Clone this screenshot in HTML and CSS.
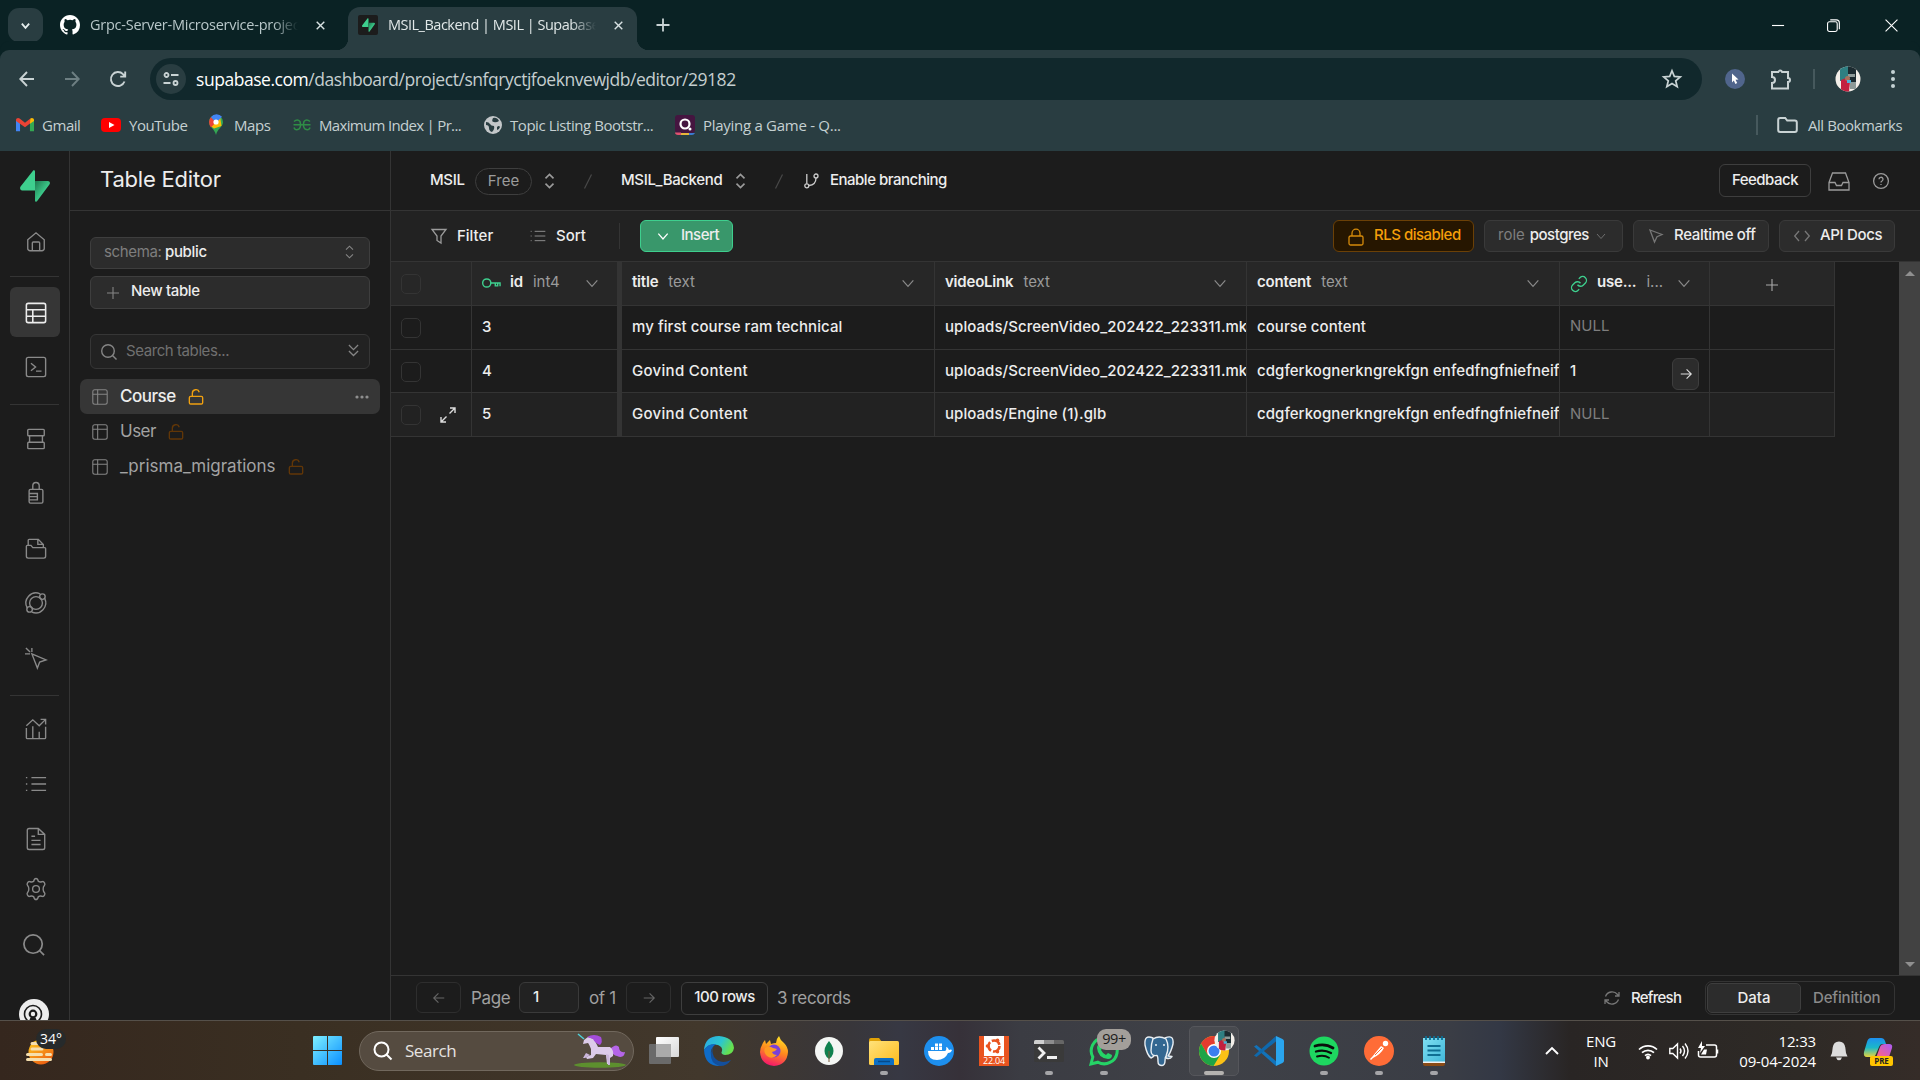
FILE: index.html
```html
<!DOCTYPE html>
<html lang="en">
<head>
<meta charset="utf-8">
<title>MSIL_Backend | MSIL | Supabase</title>
<link rel="stylesheet" href="styles.css">
</head>
<body>
<svg class="defs" aria-hidden="true">
  <linearGradient id="gBolt" x1="0" y1="0" x2="1" y2="1"><stop offset="0" stop-color="#1e7a50"/><stop offset=".6" stop-color="#3ecf8e"/></linearGradient>
  <linearGradient id="gWin" x1="0" y1="0" x2="1" y2="1"><stop offset="0" stop-color="#7ef0ff"/><stop offset="1" stop-color="#0a8fff"/></linearGradient>
  <linearGradient id="gSun" x1="0" y1="0" x2=".6" y2="1"><stop offset="0" stop-color="#ffd21f"/><stop offset="1" stop-color="#ee6212"/></linearGradient>
  <linearGradient id="gEdge" x1="0" y1="0" x2="1" y2=".4"><stop offset="0" stop-color="#2aa7e8"/><stop offset=".6" stop-color="#2cc6cf"/><stop offset="1" stop-color="#66e04e"/></linearGradient>
  <linearGradient id="gFox" x1=".7" y1="0" x2=".4" y2="1"><stop offset="0" stop-color="#ffe226"/><stop offset=".5" stop-color="#ff8a1d"/><stop offset="1" stop-color="#f5156c"/></linearGradient>
  <linearGradient id="gPane" x1="0" y1="0" x2="1" y2="1"><stop offset="0" stop-color="#fff"/><stop offset="1" stop-color="#d8d8d8"/></linearGradient>
  <linearGradient id="gFold" x1="0" y1="0" x2="1" y2="1"><stop offset="0" stop-color="#ffe27a"/><stop offset="1" stop-color="#fdbb1c"/></linearGradient>
  <linearGradient id="gCop1" x1="0" y1="0" x2="0" y2="1"><stop offset="0" stop-color="#1e8ff0"/><stop offset=".5" stop-color="#1ab8c9"/><stop offset="1" stop-color="#e8d43a"/></linearGradient>
  <linearGradient id="gCop2" x1="1" y1="0" x2="0" y2="1"><stop offset="0" stop-color="#a95bf5"/><stop offset=".6" stop-color="#f0609a"/><stop offset="1" stop-color="#ff9a4a"/></linearGradient>
  <linearGradient id="gNote" x1="0" y1="0" x2="1" y2="1"><stop offset="0" stop-color="#7fe0f3"/><stop offset="1" stop-color="#3fb6d8"/></linearGradient>
  <symbol id="x" viewBox="0 0 24 24"><path d="M5 5l14 14M19 5L5 19"/></symbol>
  <symbol id="chev" viewBox="0 0 24 24"><path d="M4 8l8 9 8-9"/></symbol>
  <symbol id="updown" viewBox="0 0 12 18"><path d="M1.500 6L6 1.500 10.500 6M1.500 12L6 16.500 10.500 12"/></symbol>
  <symbol id="grid" viewBox="0 0 24 24"><rect x="1.200" y="1.200" width="21.600" height="21.600" rx="3"/><path d="M1.200 8h21.600M8.500 1.200v21.600"/></symbol>
  <symbol id="unlock" viewBox="0 0 24 24"><rect x="2" y="11" width="20" height="11.500" rx="2"/><path d="M6.500 11V6.500a5.300 5.300 0 0 1 10.400-1.600"/></symbol>
  <symbol id="arrow" viewBox="0 0 24 24"><path d="M3 12h18M13 4l8 8-8 8"/></symbol>
  <symbol id="list" viewBox="0 0 24 24"><path d="M7 5h16M7 12h16M7 19h16M1 5h1.500M1 12h1.500M1 19h1.500"/></symbol>
  <symbol id="bolt" viewBox="0 0 30 32"><path fill="#3ecf8e" d="M15 1.500v19H2.200C.4 20.500-.6 18 .6 16.500L13 .7c.7-.9 2-.4 2 .8z"/><path fill="url(#gBolt)" d="M15 30.500V11h12.800c1.800 0 2.800 2 1.600 3.500L17 31.300c-.7.900-2 .4-2-.8z"/></symbol>
  <symbol id="photo" viewBox="0 0 26 26"><clipPath id="pc"><circle cx="13" cy="13" r="12.500"/></clipPath><g clip-path="url(#pc)"><path fill="#f3efe9" d="M0 0h26v26H0z"/><path fill="#2f7f82" d="M5 0h9v15H5z"/><path fill="#1c2b30" d="M13 0h8v17h-8z"/><path fill="#8d9a98" d="M13 8h7v3h-7zM15 16h6v7h-6z"/><path fill="#c3203f" d="M6 14l5-2 4 4-1 10H6z"/><circle cx="12.500" cy="12.500" r="2.500" fill="#a8705b"/><path fill="#4db0d8" d="M12 14h4v3h-4z"/></g></symbol>
</svg>

<header class="tabstrip">
  <span class="tabsearch"><svg class="ln i12" stroke-width="4"><use href="#chev"/></svg></span>
  <div class="tab">
    <svg class="i20" viewBox="0 0 16 16" fill="#fff"><path d="M8 0C3.580 0 0 3.580 0 8c0 3.540 2.290 6.530 5.470 7.590.4.070.55-.17.55-.38v-1.490c-2.010.37-2.530-.49-2.690-.94-.09-.23-.48-.94-.82-1.130-.28-.15-.68-.52-.01-.53.63-.01 1.080.58 1.230.82.720 1.210 1.870.87 2.330.66.070-.52.280-.87.510-1.070-1.780-.2-3.640-.89-3.640-3.950 0-.87.310-1.590.82-2.150-.08-.2-.36-1.020.080-2.120 0 0 .67-.21 2.200.82a7.600 7.600 0 0 1 4 0c1.530-1.040 2.200-.82 2.200-.82.440 1.100.160 1.920.080 2.120.510.560.82 1.270.82 2.150 0 3.070-1.870 3.750-3.650 3.950.290.250.540.730.540 1.480v2.190c0 .210.150.460.550.380A8 8 0 0 0 16 8c0-4.420-3.580-8-8-8z"/></svg>
    <span class="t tabtxt">Grpc-Server-Microservice-projec</span>
    <svg class="ln i14" stroke-width="2.600"><use href="#x"/></svg>
  </div>
  <div class="tab on">
    <span class="fav"><svg class="favb"><use href="#bolt"/></svg></span>
    <span class="t tabtxt">MSIL_Backend | MSIL | Supabase</span>
    <svg class="ln i14" stroke-width="2.600"><use href="#x"/></svg>
  </div>
  <svg class="ln i16 newtab" viewBox="0 0 16 16" stroke-width="1.800"><path d="M8 1.500v13M1.500 8h13"/></svg>
  <div class="winctl">
    <svg viewBox="0 0 14 14"><path d="M0 7h13"/></svg>
    <svg viewBox="0 0 14 14"><rect x=".6" y="3" width="10.400" height="10.400" rx="2"/><path d="M3.500 1h6.500a3.300 3.300 0 0 1 3.300 3.300V11"/></svg>
    <svg viewBox="0 0 14 14"><path d="M.6.6l12.800 12.800M13.400.6L.6 13.400"/></svg>
  </div>
</header>

<div class="toolbar">
  <svg class="ln i16" viewBox="0 0 16 16" stroke-width="1.900"><path d="M15 8H1.500M8 1L1.300 8 8 15"/></svg>
  <svg class="ln i16 dim" viewBox="0 0 16 16" stroke-width="1.900"><path d="M1 8h13.500M8 1l6.700 7L8 15"/></svg>
  <svg class="ln i18" viewBox="0 0 18 18" stroke-width="1.900"><path d="M15.500 11.500A7 7 0 1 1 14 4.200L16 6M16.200 1.500V6.600h-5"/></svg>
  <div class="url">
    <span class="site"><svg class="ln i16" viewBox="0 0 16 16" stroke-width="1.800"><circle cx="3.500" cy="4" r="2"/><path d="M8 4h7.500M.5 12h7"/><circle cx="12.500" cy="12" r="2"/></svg></span>
    <span class="t urltxt"><b>supabase.com</b>/dashboard/project/snfqryctjfoeknvewjdb/editor/29182</span>
    <svg class="ln i20 star" viewBox="0 0 20 20" stroke-width="1.700"><path d="M10 1.800l2.300 5.600 6 .5-4.600 3.900 1.500 5.900-5.200-3.200-5.200 3.200 1.500-5.900L1.700 7.900l6-.5z"/></svg>
  </div>
  <svg class="i20" viewBox="0 0 20 20"><circle cx="10" cy="10" r="10" fill="#50658c"/><path fill="#fff" d="M7 4.500l6.500 6-3 .2 1.700 3.300-1.800.9-1.600-3.400L7 13.500z"/></svg>
  <svg class="ln i22" viewBox="0 0 22 22" stroke-width="2"><path d="M2 4h6.300a2 2 0 0 1 3.800 0H18v6a2 2 0 0 1 0 4v6.500H2v-5.500a3 3 0 0 0 0-6z"/></svg>
  <i class="vr"></i>
  <svg class="i25"><use href="#photo"/></svg>
  <svg class="i20" viewBox="0 0 20 20" fill="#c4d2d4"><circle cx="10" cy="3" r="2"/><circle cx="10" cy="10" r="2"/><circle cx="10" cy="17" r="2"/></svg>
</div>

<div class="bookmarks">
  <svg viewBox="0 0 20 16" class="bi"><path fill="#4285f4" d="M0 2v13h4.500V6z"/><path fill="#34a853" d="M20 2v13h-4.500V6z"/><path fill="#ea4335" d="M0 2.500C0 .3 2.500-.5 4 .8l6 4.700 6-4.700 1 4.400-7 5.300L0 3.500z"/><path fill="#fbbc04" d="M20 2.500C20 .3 17.500-.5 16 .8l-.5 5.700L20 3.500z"/></svg>
  <span class="t">Gmail</span>
  <svg viewBox="0 0 20 14" class="bi"><rect width="20" height="14" rx="4" fill="#f00"/><path fill="#fff" d="M8 4l5.500 3L8 10z"/></svg>
  <span class="t">YouTube</span>
  <svg viewBox="0 0 14 20" class="bi"><path fill="#34a853" d="M0 7a7 7 0 0 1 14 0c0 5-5.500 6.500-7 13C5.500 13.500 0 12 0 7z"/><path fill="#fbbc04" d="M1.500 11L11 1.200 12.500 11 5 13.500z"/><path fill="#ea4335" d="M0 7a7 7 0 0 1 2-5l5 5-5 5.500Q0 10 0 7z"/><path fill="#4285f4" d="M2 2a7 7 0 0 1 11-.2L7 8z"/><circle cx="7" cy="7" r="2.600" fill="#fff"/></svg>
  <span class="t">Maps</span>
  <svg viewBox="0 0 18 12" class="bi" fill="none" stroke="#2f8d46" stroke-width="1.500"><path d="M1 2.500q3.500-3 6 0 1.500 5-1 7.500-4 2-5-1.500M.5 5.800h17M17 2.500q-3.500-3-6 0-1.500 5 1 7.500 4 2 5-1.500"/></svg>
  <span class="t tight">Maximum Index | Pr...</span>
  <svg viewBox="0 0 18 18" class="bi"><circle cx="9" cy="9" r="9" fill="#c3c7c9"/><path fill="#293d41" d="M2 6q3 0 4 2t4 2q1 3-2 6-3-1-3-4T2 9zM9 2q4-1 6 3-3 2-5 1-3 0-1-4zM13 11q2-2 3 0-1 3-3 3z"/></svg>
  <span class="t">Topic Listing Bootstr...</span>
  <svg viewBox="0 0 20 20" class="bi"><rect width="20" height="18" rx="3" fill="#451540"/><path fill="#3b7bd0" d="M14 18h6q-1 2-3 2h-4z"/><path fill="#e8b53a" d="M6 18h8v2H6z"/><path fill="#e0516f" d="M0 17.500h6V20H3q-3-.5-3-2.500z"/><circle cx="10" cy="9" r="4.500" fill="none" stroke="#fff" stroke-width="2.200"/><circle cx="15" cy="14" r="1.500" fill="#fff"/></svg>
  <span class="t loose">Playing a Game - Q...</span>
  <i class="vr"></i>
  <svg class="ln bi" viewBox="0 0 21 16" stroke-width="2"><path d="M1.200 13V3q0-2 2-2h5l2 2.500h7.600q2 0 2 2V13q0 2-2 2H3.200q-2 0-2-2z"/></svg>
  <span class="t">All Bookmarks</span>
</div>

<main class="app">
  <nav class="rail">
    <svg class="logo"><use href="#bolt"/></svg>
    <svg viewBox="0 0 24 24"><path d="M3 9.500L12 2l9 7.500V19a2.500 2.500 0 0 1-2.500 2.500h-13A2.500 2.500 0 0 1 3 19zM8 21.500V13a1 1 0 0 1 1-1h6a1 1 0 0 1 1 1v8.500"/></svg>
    <hr>
    <span class="cur"><svg viewBox="0 0 24 24"><rect x="1.500" y="1.500" width="21" height="21" rx="2"/><path d="M1.500 8.500h21M1.500 15.500h21M8.500 8.500v14"/></svg></span>
    <svg viewBox="0 0 24 24"><rect x="1.500" y="1.500" width="21" height="21" rx="2"/><path d="M6.500 8l5 4-5 4M12 16.500h6"/></svg>
    <hr>
    <svg viewBox="0 0 24 24"><rect x="3" y="1.500" width="18" height="7" rx="1"/><rect x="3" y="15.500" width="18" height="7" rx="1"/><path d="M5 8.500v7M19 8.500v7"/></svg>
    <svg viewBox="0 0 24 24"><rect x="4.500" y="8" width="15" height="15" rx="1.500"/><path d="M8.500 8V4a3.500 3.500 0 0 1 7 0v4M4.500 12.500h9v7h-9M4.500 16h9"/></svg>
    <svg viewBox="0 0 24 24"><path d="M3.500 8V2.500q0-1 1-1h10l5.500 5.500v3M14 1.500V7h6M1.500 20V9q0-1 1-1h4l2 2.500h13q1 0 1 1V20q0 2-2 2h-17q-2 0-2-2z"/></svg>
    <svg viewBox="0 0 24 24"><circle cx="12" cy="12" r="7"/><circle cx="19" cy="5" r="3"/><circle cx="5" cy="19" r="3"/><path d="M16.500 2A11 11 0 0 0 2.500 17.500M7.500 22A11 11 0 0 0 21.500 7"/></svg>
    <svg viewBox="0 0 24 24"><path d="M7.500 7.500L23 14l-7 2.500L13.500 23zM1 1l4.500 4.500M7.500 1v4.500M0 7.500h5.500"/></svg>
    <hr>
    <svg viewBox="0 0 24 24"><path d="M1.500 11v10.500q0 1 1 1h19q1 0 1-1v-12M8.500 9v13M15.500 15v7M1.500 8.500L8.500 2l7 6.500L22.500 1.500M17 1.500h5.500V7"/></svg>
    <svg><use href="#list"/></svg>
    <svg viewBox="0 0 24 24"><path d="M14.500.5H4.500Q2.500.5 2.500 2.500v19q0 2 2 2h15q2 0 2-2V7zM14.500.5V7h7M7 9h4M7 13.500h10M7 18h10"/></svg>
    <svg viewBox="0 0 24 24"><circle cx="12" cy="12" r="3.700"/><path d="M12 .5c2 0 2.200 1.800 2.600 3.300 2 1 2 .8 4.400.1 1.700-.5 3.500 2.700 2.300 4-1.500 1.600-1.600 1.600-1.500 4.100s0 2.500 1.500 4.100c1.200 1.300-.6 4.500-2.300 4-2.400-.7-2.400-.9-4.400.1-.4 1.500-.6 3.300-2.600 3.300s-2.200-1.800-2.600-3.300c-2-1-2-.8-4.400-.1-1.700.5-3.500-2.700-2.300-4 1.500-1.600 1.500-1.600 1.500-4.100s0-2.500-1.500-4.100c-1.200-1.300.6-4.500 2.300-4 2.400.7 2.400.9 4.400-.1C9.800 2.300 10 .5 12 .5z"/></svg>
    <svg class="find" viewBox="0 0 24 24"><circle cx="11" cy="11" r="10"/><path d="M18 18l5 5"/></svg>
    <svg class="me" viewBox="0 0 30 30"><circle cx="15" cy="15" r="15" fill="#ededed"/><g fill="none" stroke="#1c1c1c" stroke-width="1.600"><circle cx="14" cy="15" r="8.500"/><circle cx="14" cy="15" r="3.300" stroke-width="2.200"/></g><path d="M11.500 18.500L10 22h8l-1.500-3.500z" fill="#1c1c1c"/></svg>
  </nav>

  <aside class="panel">
    <h1><span class="t">Table Editor</span></h1>
    <div class="pick"><span class="t mut">schema:</span><span class="t">public</span><svg class="ud"><use href="#updown"/></svg></div>
    <div class="pick new"><svg viewBox="0 0 12 12"><path d="M6 0v12M0 6h12"/></svg><span class="t">New table</span></div>
    <div class="pick search"><svg viewBox="0 0 16 16"><circle cx="7" cy="7" r="6.300"/><path d="M11.500 11.500L15.500 15.500"/></svg><span class="t">Search tables...</span><svg viewBox="0 0 12 14"><path d="M1 1l5 5 5-5M1 7.500l5 5 5-5"/></svg></div>
    <div class="item on"><svg class="i16 g"><use href="#grid"/></svg><span class="t">Course</span><svg class="i16 lk"><use href="#unlock"/></svg><svg class="dots" viewBox="0 0 14 4"><circle cx="2" cy="2" r="1.600"/><circle cx="7" cy="2" r="1.600"/><circle cx="12" cy="2" r="1.600"/></svg></div>
    <div class="item"><svg class="i16 g"><use href="#grid"/></svg><span class="t">User</span><svg class="i16 lk"><use href="#unlock"/></svg></div>
    <div class="item long"><svg class="i16 g"><use href="#grid"/></svg><span class="t">_prisma_migrations</span><svg class="i16 lk"><use href="#unlock"/></svg></div>
  </aside>

  <section class="work">
    <div class="crumbs">
      <span class="t">MSIL</span><span class="pill"><span class="t">Free</span></span><svg class="ud"><use href="#updown"/></svg>
      <svg class="slash" viewBox="0 0 8 15"><path d="M7.500.5L.5 14.500"/></svg>
      <span class="t">MSIL_Backend</span><svg class="ud"><use href="#updown"/></svg>
      <svg class="slash" viewBox="0 0 8 15"><path d="M7.500.5L.5 14.500"/></svg>
      <svg class="branch" viewBox="0 0 15 16"><circle cx="2.800" cy="12.800" r="2"/><circle cx="12" cy="3" r="2"/><path d="M2.800 1v9.800M12 5q0 7-7.200 7.500"/></svg>
      <span class="t tight">Enable branching</span>
      <span class="btn ghost fb"><span class="t tight">Feedback</span></span>
      <svg class="i22 hd" viewBox="0 0 22 22"><path d="M1 12.500L4.500 3h13L21 12.500V20H1zM1 12.500h6l1.500 3h5l1.500-3h6"/></svg>
      <svg class="i16 hd" viewBox="0 0 16 16"><circle cx="8" cy="8" r="7.400"/><path d="M6 6.300a2 2 0 1 1 3 1.700q-1 .5-1 1.500M8 11v1"/></svg>
    </div>
    <div class="tools">
      <svg class="i16" viewBox="0 0 16 16"><path d="M1 1.500h14L10 8v7l-4-2.500V8z"/></svg><span class="t wide">Filter</span>
      <svg class="i16"><use href="#list"/></svg><span class="t wide">Sort</span>
      <i class="vr"></i>
      <span class="btn ins"><svg class="i14"><use href="#chev"/></svg><span class="t tight">Insert</span></span>
      <span class="btn rls"><svg class="i18" viewBox="0 0 18 18"><rect x="2" y="8" width="14" height="9" rx="1.500"/><path d="M5 8V5.200a4 4 0 0 1 8 0V8"/></svg><span class="t tight">RLS disabled</span></span>
      <span class="btn role"><span class="t mut">role</span><span class="t tight">postgres</span><svg class="i12"><use href="#chev"/></svg></span>
      <span class="btn rt"><svg class="i14" viewBox="0 0 14 14"><path d="M1 1l12 4.500-5 2.200L5.500 13z"/></svg><span class="t">Realtime off</span></span>
      <span class="btn api"><svg class="i16" viewBox="0 0 16 16"><path d="M5 3L.7 8 5 13M11 3l4.300 5L11 13"/></svg><span class="t">API Docs</span></span>
    </div>

    <div class="body">
      <div class="table">
        <div class="row head">
          <div class="sel"><i class="cb"></i></div>
          <div class="c key"><svg class="ki" viewBox="0 0 20 12"><circle cx="5" cy="6" r="4.300"/><path d="M9.300 6H19v3.500M14 6v3h2.500V6"/></svg><b class="t">id</b><span class="t ty">int4</span><svg class="cv"><use href="#chev"/></svg></div>
          <div class="c"><b class="t">title</b><span class="t ty">text</span><svg class="cv"><use href="#chev"/></svg></div>
          <div class="c"><b class="t">videoLink</b><span class="t ty">text</span><svg class="cv"><use href="#chev"/></svg></div>
          <div class="c"><b class="t">content</b><span class="t ty">text</span><svg class="cv"><use href="#chev"/></svg></div>
          <div class="c lnk"><svg class="li" viewBox="0 0 24 24"><path d="M10 13a5 5 0 0 0 7.540.540l3-3a5 5 0 0 0-7.070-7.070l-1.720 1.710M14 11a5 5 0 0 0-7.540-.540l-3 3a5 5 0 0 0 7.070 7.070l1.710-1.710"/></svg><b class="t">use...</b><span class="t ty">i...</span><svg class="cv"><use href="#chev"/></svg></div>
          <div class="c add"><svg class="i12" viewBox="0 0 12 12"><path d="M6 0v12M0 6h12"/></svg></div>
        </div>
        <div class="row"><div class="sel"><i class="cb"></i></div><div class="c"><span class="t">3</span></div><div class="c"><span class="t">my first course ram technical</span></div><div class="c"><span class="t">uploads/ScreenVideo_202422_223311.mk</span></div><div class="c"><span class="t">course content</span></div><div class="c nul up"><span class="t">NULL</span></div><div class="c"></div></div>
        <div class="row"><div class="sel"><i class="cb"></i></div><div class="c"><span class="t">4</span></div><div class="c"><span class="t gv">Govind Content</span></div><div class="c"><span class="t">uploads/ScreenVideo_202422_223311.mk</span></div><div class="c"><span class="t">cdgferkognerkngrekfgn enfedfngfniefneif</span></div><div class="c"><span class="t">1</span><span class="go"><svg class="i14"><use href="#arrow"/></svg></span></div><div class="c"></div></div>
        <div class="row hov"><div class="sel"><i class="cb"></i><svg class="i16 ex" viewBox="0 0 16 16"><path d="M9.500 6.500l5.500-5.500M10 1h5v5M6.500 9.500L1 15M1 10v5h5"/></svg></div><div class="c"><span class="t">5</span></div><div class="c"><span class="t gv">Govind Content</span></div><div class="c"><span class="t">uploads/Engine (1).glb</span></div><div class="c"><span class="t">cdgferkognerkngrekfgn enfedfngfniefneif</span></div><div class="c nul"><span class="t">NULL</span></div><div class="c"></div></div>
      </div>
      <div class="scroll"><i></i><i></i></div>
    </div>

    <div class="foot">
      <span class="btn ghost off"><svg class="i14 flip"><use href="#arrow"/></svg></span>
      <span class="t big">Page</span>
      <span class="btn pg"><span class="t">1</span></span>
      <span class="t big">of 1</span>
      <span class="btn ghost off"><svg class="i14"><use href="#arrow"/></svg></span>
      <span class="btn ghost rows"><span class="t tight">100 rows</span></span>
      <span class="t big">3 records</span>
      <svg class="i16 rf" viewBox="0 0 16 16"><path d="M15 2v4h-4M1 14v-4h4M1.500 6.500A7 7 0 0 1 13.500 4.500L15 6M14.500 9.500A7 7 0 0 1 2.500 11.500L1 10"/></svg>
      <span class="t tight">Refresh</span>
      <span class="seg"><span class="sg"><span class="t wide">Data</span></span><span class="t df">Definition</span></span>
    </div>
  </section>
</main>

<footer class="taskbar">
  <div class="weather"><svg viewBox="0 0 28 26"><circle cx="15" cy="13" r="12.500" fill="url(#gSun)"/><g stroke="#f5dfae" stroke-width="3" stroke-linecap="round"><path d="M6 4.500h6M6 10h10M1.500 15.500h14M20.500 15.500h4M1.500 20.500h23"/></g></svg><span class="deg">34°</span></div>
  <svg class="win" viewBox="0 0 29 29" fill="url(#gWin)"><path d="M0 1q0-1 1-1h13v14H0zM15 0h13q1 0 1 1v13H15zM0 15h14v14H1q-1 0-1-1zM15 15h14v13q0 1-1 1H15z"/></svg>
  <div class="find2"><svg class="i20" viewBox="0 0 20 20"><circle cx="8.500" cy="8.500" r="7"/><path d="M13.500 13.500L18.500 18.500"/></svg><span class="t">Search</span>
    <svg class="uni" viewBox="0 0 53 34"><ellipse cx="27" cy="31" rx="26" ry="2.800" fill="#5d8f2e"/><path fill="#b565e8" d="M37 15q6-6 9-2 0 6 6 5-1 7-8 4-4-1-5-4z"/><path fill="#dccbe9" d="M11 6l4-3 6 2 4 8 12 0q4 3 3 9l-3 2v6h-3l-1-9-10-1-3 4-6 1-1-2 5-2 0-6q-2-5-3-6l-5 1z"/><path fill="#cbb6dc" d="M13 19l-3 5h2l5-3zM33 20l2 11h2l-1-10z"/><path fill="#a44ddb" d="M14 3q7-4 14 0 2 5-1 8-5-2-7-6z"/><path stroke="#4fd0d8" stroke-width="1.500" d="M11 5L5 0"/></svg>
  </div>
  <div class="apps">
    <span class="ap"><svg viewBox="0 0 30 30"><rect x="0" y="8" width="22" height="20" rx="1" fill="#6a6a6a"/><rect x="7" y="1" width="23" height="20" rx="1" fill="url(#gPane)"/><path fill="#aaa" d="M7 8h15v13H7z"/></svg></span>
    <span class="ap"><svg viewBox="0 0 30 30"><path fill="url(#gEdge)" d="M0 14Q1 0 15 0q14 1 15 12-1 7-9 7-5-1-3-4 1-4-4-6Q5 7 0 14z"/><path fill="#0f6cc9" d="M0 14Q4 7 12 8q-6 4-5 11 2 9 10 11-16 1-17-16z"/><path fill="#134f9c" d="M12 8q-6 5-2 13 6 8 17 3-4 6-11 6Q6 28 7 17q1-6 5-9z"/></svg></span>
    <span class="ap"><svg viewBox="0 0 30 30"><path fill="url(#gFox)" d="M3 9q1-3 3-5l1 4 4-4 1 4q3-1 5-1 0-4 3-7 1 4 5 7 4 4 4 9-1 13-14 14Q2 29 1 16q0-4 2-7z"/><circle cx="15" cy="15" r="6.500" fill="#7b40d8"/><path fill="#ff9a22" d="M6 12q4-3 8 0l4 1q-2 3-5 3 1 3 5 3-5 5-10 1-4-4-2-8z"/></svg></span>
    <span class="ap"><svg viewBox="0 0 30 30"><circle cx="15" cy="15" r="14" fill="#f4f6f4"/><path fill="#10814f" d="M15 5q6 7 4 13-1 3-4 5-3-2-4-5-2-6 4-13z"/><path stroke="#7a5b3a" d="M15 15v11"/></svg></span>
    <span class="ap run"><svg viewBox="0 0 30 30"><path fill="#e0a106" d="M0 4q0-2 2-2h8l3 4v6H0z"/><rect y="5" width="30" height="24" rx="1.500" fill="url(#gFold)"/><path fill="#0d6fc4" d="M5 29v-5q0-2 2-2h16q2 0 2 2v5z"/><path stroke="#064a89" stroke-width="1.500" d="M9 25.500h12"/></svg></span>
    <span class="ap"><svg viewBox="0 0 30 30"><circle cx="15" cy="15" r="15" fill="#1d8fee"/><path fill="#fff" d="M4 15h17q2-1 1-4 2 0 3 3 2-1 3 0-1 3-4 3-3 7-11 7-9 0-9-9zM7 11h3v3H7zM11 11h3v3h-3zM15 11h3v3h-3zM11 7.500h3v3h-3zM15 7.500h3v3h-3z"/></svg></span>
    <span class="ap ubu"><svg viewBox="0 0 30 30"><path fill="#e95420" d="M0 0h30v30H0z"/><path fill="#fff" d="M5 0h20v20H5z"/><circle cx="15" cy="10" r="5.500" fill="none" stroke="#e95420" stroke-width="2.600" stroke-dasharray="9.500 2"/><g fill="#e95420"><circle cx="8.500" cy="10" r="1.800"/><circle cx="18.500" cy="4.200" r="1.800"/><circle cx="18.500" cy="15.800" r="1.800"/></g></svg><span class="ver">22.04</span></span>
    <span class="ap run"><svg viewBox="0 0 30 30"><rect y="4" width="30" height="22" rx="1.500" fill="#3a3a3a"/><path fill="#cfcfcf" d="M0 8V5.500Q0 4 1.500 4H10v4z"/><path fill="#8d8d8d" d="M10 4h10v4H10z"/><path fill="#666" d="M20 4h8.500Q30 4 30 5.500V8H20z"/><path fill="none" stroke="#f0f0f0" stroke-width="2.800" d="M4.500 11.500L10 17l-5.500 5.500M13 21.500h10"/></svg></span>
    <span class="ap run"><svg viewBox="0 0 30 30"><path fill="none" stroke="#25d366" stroke-width="3" d="M2 28l1.800-7A13 13 0 1 1 9 26.200z"/><path fill="#25d366" d="M9 9q2-2 3 0l1 3-1 2q2 4 5 5l2-2 4 2q0 4-4 4Q9 22 8 12q0-2 1-3z"/></svg><span class="cnt">99+</span></span>
    <span class="ap"><svg viewBox="0 0 30 30"><g fill="#336791" stroke="#e8eef3" stroke-width="1.400" stroke-linejoin="round"><path d="M9 2Q0-2 1 9q2 10 6 13 3-1 4-4z"/><path d="M21 2q9-4 8 6-2 8-5 12l4 .5q-2 3-6 1.500V8z"/><path d="M9 3q6-4 13 0 4 8 0 17-1 1-1 5 0 4-3 4.500-4 0-4-4 0-5-1-6-6 1-6-5Q7 8 9 3z"/></g><circle cx="12" cy="9" r=".9" fill="#fff"/><circle cx="20" cy="9" r=".9" fill="#fff"/></svg></span>
    <span class="ap run act"><svg viewBox="0 0 30 30"><circle cx="15" cy="15" r="15" fill="#fbc116"/><path fill="#e33b2e" d="M2 7.500A15 15 0 0 1 28 7.500H15l-6.500 11z"/><path fill="#1ea446" d="M2 7.500A15 15 0 0 0 14.500 30l7-11.500H8.500z"/><circle cx="15" cy="15" r="7" fill="#fff"/><circle cx="15" cy="15" r="5.500" fill="#3a7ef0"/></svg><svg class="ph"><use href="#photo"/></svg></span>
    <span class="ap"><svg viewBox="0 0 30 30"><path fill="#1273ba" d="M0 10.500L2.500 9l20 16.500L22 30z"/><path fill="#0f69ad" d="M0 19.500L2.500 21l20-16L22 0z"/><path fill="#2aa5ee" d="M22 0l6.500 3Q30 4 30 5v20q0 1-1.500 2L22 30z"/></svg></span>
    <span class="ap run"><svg viewBox="0 0 30 30"><circle cx="15" cy="15" r="14.500" fill="#1ed760"/><path fill="none" stroke="#0a0f0b" stroke-linecap="round" d="M6 10q10-3 18 2" stroke-width="2.800"/><path fill="none" stroke="#0a0f0b" stroke-linecap="round" d="M7 15.500q8-2.500 15 1.500" stroke-width="2.300"/><path fill="none" stroke="#0a0f0b" stroke-linecap="round" d="M8 20.500q7-2 12 1.300" stroke-width="1.900"/></svg></span>
    <span class="ap run"><svg viewBox="0 0 30 30"><circle cx="15" cy="15" r="15" fill="#ff6c37"/><circle cx="21.500" cy="7.500" r="2.700" fill="#fff"/><path fill="#fff" d="M8 21l9-11 3 2q-3 6-11 10l-2 2-1-1z"/><path stroke="#ff6c37" d="M11 19l7-7"/></svg></span>
    <span class="ap run"><svg viewBox="0 0 30 30"><path fill="url(#gNote)" d="M4 2h22v25H4z"/><path fill="#8a4b16" d="M4 27h22v1q0 2-2 2H6q-2 0-2-2z"/><path fill="#f1f1f1" d="M4 25.500h22v1.500H4z"/><path stroke="#0e6e93" stroke-width="1.800" d="M8.500 10h13M8.500 14.500h13M8.500 19h13M7 0v4M11 0v4M15 0v4M19 0v4M23 0v4"/></svg></span>
  </div>
  <div class="tray">
    <svg class="i14 tl" viewBox="0 0 14 14"><path d="M1 10l6-6 6 6"/></svg>
    <div class="lang"><span class="t">ENG</span><span class="t">IN</span></div>
    <svg class="i20 tl" viewBox="0 0 20 20"><path d="M1 8.500a13 13 0 0 1 18 0M4 11.700a8.700 8.700 0 0 1 12 0M7 14.700a4.500 4.500 0 0 1 6 0" stroke-width="1.700"/><circle cx="10" cy="16.500" r="1" fill="#fff"/></svg>
    <svg class="i20 tl" viewBox="0 0 20 20"><path stroke-width="1.400" d="M.8 7.500h3L8.500 3v14L3.800 12.500h-3zM11 7.500q2 2.500 0 5M13.500 5q4 5 0 10M16 2.500q6 7.500 0 15"/></svg>
    <svg class="i22 tl" viewBox="0 0 22 22"><path stroke-width="1.500" d="M9 5h8.500q2 0 2 2v8q0 2-2 2h-14q-2 0-2-2v-4M20.500 9.500v4"/><path fill="#fff" stroke="none" d="M5 1L1 8h3L3 13l5-7H5zM4 14.500h5l1-5H7z"/></svg>
    <div class="clock"><span class="t">12:33</span><span class="t">09-04-2024</span></div>
    <svg class="i20" viewBox="0 0 20 20" fill="#dcdcdc"><path d="M10 .5q5.500 0 6.300 6L17 12l1.500 3.500h-17L3 12l.7-5.500Q4.500.5 10 .5zM7 16.500h6q-1 2.800-3 2.800t-3-2.800z"/></svg>
    <div class="cop"><svg viewBox="0 0 30 28"><path fill="url(#gCop1)" d="M8 1h10q3 0 4 3l1 3h-4q-2 0-3 3l-3 7q-1 3-4 3H4q-4 0-3-5L4 5q1-4 4-4z"/><path fill="url(#gCop2)" d="M22 7h4q4 0 3 4l-3 9q-1 4-4 4H9q3 0 4-3l4-11q1-3 5-3z"/></svg><span class="pre">PRE</span></div>
  </div>
</footer>
</body>
</html>
```
FILE: styles.css
```css
* { box-sizing: border-box; }
body { margin: 0; width: 1920px; height: 1080px; overflow: hidden; display: flex; flex-direction: column; background: #1c1c1c; font-family: Inter, sans-serif; font-size: 15px; line-height: 20px; color: #ededed; }
svg { display: block; flex: none; overflow: visible; }
.defs { position: absolute; width: 0; height: 0; }
.t { white-space: nowrap; display: block; }
.t.wide { letter-spacing: 0; }
.ln { fill: none; stroke: #c9d3d4; stroke-linecap: butt; }
.i12 { width: 12px; height: 12px; } .i14 { width: 14px; height: 14px; } .i16 { width: 16px; height: 16px; } .i18 { width: 18px; height: 18px; } .i20 { width: 20px; height: 20px; } .i22 { width: 22px; height: 22px; } .i25 { width: 26px; height: 26px; }
.vr { display: block; width: 2px; height: 20px; background: #46595d; }

/* browser chrome */
.tabstrip, .toolbar, .bookmarks, .taskbar { font-family: "Open Sans", "Noto Sans", sans-serif; }
.tabstrip { height: 50px; background: #0a2224; display: flex; align-items: center; flex: none; }
.tabsearch { width: 35px; height: 34px; margin-left: 8px; border-radius: 11px; background: #293d41; display: grid; place-items: center; }
.tabsearch svg { width: 11px; height: 11px; stroke: #e6eeee; }
.tab { display: grid; grid-template-columns: 30px 208px 1fr; align-items: center; margin-left: 17px; width: 288px; height: 42px; }
.tab > .i14 { margin-left: 16px; width: 13px; height: 13px; stroke: #d8e2e3; }
.tab.on { align-self: flex-end; margin-left: 0; padding: 0 0 7px 10px; width: 289px; height: 43px; background: #293d41; border-radius: 12px 12px 0 0; position: relative; }
.tab.on::before, .tab.on::after { content: ""; position: absolute; bottom: 0; width: 12px; height: 12px; }
.tab.on::before { left: -12px; background: radial-gradient(circle at 0 0, transparent 12px, #293d41 12.5px); }
.tab.on::after { right: -12px; background: radial-gradient(circle at 100% 0, transparent 12px, #293d41 12.5px); }
.tabtxt { font-size: 14.5px; letter-spacing: -0.25px; overflow: hidden; color: #b8c7c9; -webkit-mask-image: linear-gradient(90deg, #000 88%, transparent); mask-image: linear-gradient(90deg, #000 88%, transparent); }
.on .tabtxt { color: #e1e8e8; letter-spacing: -0.5px; }
.fav { width: 20px; height: 20px; border-radius: 2px; background: #1c1c1c; display: grid; place-items: center; }
.favb { width: 13px; height: 14px; }
.newtab { margin-left: 18px; }
.winctl { margin-left: auto; display: flex; gap: 45px; padding-right: 22px; align-items: center; }
.winctl svg { width: 13px; height: 13px; fill: none; stroke: #fff; stroke-width: 1.2; }
.winctl svg:first-child { margin-right: -3px; }

.toolbar { height: 58px; background: #293d41; flex: none; display: grid; grid-template-columns: 45px 45px 41px 1552px 44px 48px 33px 38px 1fr; align-items: center; padding: 0 0 0 19px; border-radius: 9px 9px 0 0; box-shadow: 0 -9px 0 0 #0a2224; }
.toolbar .dim { stroke: #6d7f82; }
.url { height: 42px; border-radius: 21px; background: #11282c; display: grid; grid-template-columns: 40px 1fr 20px; align-items: center; padding: 0 20px 0 6px; }
.site { width: 30px; height: 30px; border-radius: 50%; background: #293d41; display: grid; place-items: center; }
.urltxt { font-size: 17.5px; line-height: 24px; letter-spacing: -0.46px; color: #c5cecf; }
.urltxt b { font-weight: 400; color: #fff; }
.toolbar > .i20 { margin-left: 23px; }
.toolbar > .i22 { margin-left: 24px; }
.toolbar > .vr { margin-left: 19px; }
.toolbar > .i25 { margin-left: 8px; }
.toolbar > .i20:last-child { margin-left: 18px; }

.bookmarks { height: 43px; background: #293d41; flex: none; display: grid; grid-template-columns: 26px 59px 28px 80px 25px 59px 26px 165px 26px 165px 28px 1053px 21px 31px 1fr; padding: 0 0 9px 16px; align-items: center; color: #c5d0d1; font-size: 15px; letter-spacing: -0.45px; }
.bookmarks .tight { letter-spacing: -0.68px; }
.bookmarks .loose { letter-spacing: -0.28px; }
.bi { width: 18px; height: 18px; }
.bookmarks .bi:nth-of-type(2), .bookmarks .bi:nth-of-type(6) { width: 20px; height: 20px; }
.bookmarks .bi:nth-of-type(3) { width: 14px; height: 20px; }
.bookmarks .bi:nth-of-type(7) { width: 21px; }

/* dashboard */
.app { flex: 1; min-height: 0; display: grid; grid-template-columns: 70px 321px 1fr; overflow: hidden; letter-spacing: -0.35px; }
.app .tight { letter-spacing: -0.5px; }
.rail { border-right: 1px solid #343434; display: grid; grid-template-rows: 70px 42px 24px 50px 60px 12px 60px 48px 64px 44px 66px 6px 64px 46px 64px 36px 74px 39px; justify-items: center; align-items: center; padding-left: 2px; overflow: hidden; }
.rail svg { width: 22px; height: 22px; fill: none; stroke: #8a8a8a; stroke-width: 1.5; }
.rail .logo { width: 30px; height: 32px; stroke: none; margin-right: 1px; }
.rail hr { width: 49px; height: 1px; border: 0; background: #343434; margin: 2px 2px 0 0; }
.rail .cur { width: 50px; height: 50px; margin-right: 1px; border-radius: 6px; background: #363636; display: grid; place-items: center; }
.rail .cur svg { stroke: #ededed; stroke-width: 1.7; margin-left: 1px; margin-top: 2px; }
.rail .find { margin-right: 4px; margin-top: 2px; stroke-width: 1.9; }
.rail .me { width: 30px; height: 30px; stroke: none; margin-right: 3px; align-self: start; margin-top: 18px; }

.panel { border-right: 1px solid #343434; display: flex; flex-direction: column; }
.panel h1 { margin: 0; height: 60px; padding: 14px 0 0 30px; border-bottom: 1px solid #343434; font-size: 22px; font-weight: 400; line-height: 28px; letter-spacing: -0.2px; }
.pick { margin: 26px 20px 0; height: 32px; border: 1px solid #3e3e3e; border-radius: 6px; background: #2c2c2c; display: grid; grid-template-columns: 61px 1fr 12px; align-items: center; padding: 0 13px 2px 13px; font-weight: 500; flex: none; }
.pick svg { fill: none; stroke: #858585; stroke-width: 1.4; }
.ud { width: 11px; height: 14px; }
.mut { color: #7e7e7e; font-weight: 400; }
.pick.new { margin-top: 7px; height: 33px; grid-template-columns: 24px 1fr; padding: 0 15px 3px 16px; }
.pick.new svg { width: 12px; height: 12px; margin-top: 4px; stroke-width: 1.1; }
.pick.search { margin-top: 25px; height: 35px; background: #222; border-color: #363636; grid-template-columns: 25px 1fr 12px; padding: 0 9px 2px 10px; color: #707070; font-weight: 400; letter-spacing: -0.42px; }
.pick.search svg { width: 16px; height: 16px; margin-top: 3px; }
.pick.search svg:last-child { width: 11px; height: 13px; margin-top: 0; }
.item { margin: 0 10px; height: 35px; flex: none; border-radius: 7px; display: flex; align-items: center; padding: 0 11px 0 12px; font-size: 17px; letter-spacing: -0.5px; color: #a3a3a3; }
.item.long { letter-spacing: 0; }
.item.on { margin-top: 10px; background: #363636; color: #ededed; font-weight: 500; }
.item svg { fill: none; stroke: #858585; stroke-width: 1.6; margin-right: 12px; }
.item .lk { margin-left: 12px; stroke: #613607; stroke-width: 2; }
.item.on .lk { stroke: #f0a010; }
.item .t { margin-top: -1px; }
.item .dots { width: 14px; height: 4px; fill: #8f8f8f; stroke: none; margin: 0 0 0 auto; }

.work { display: flex; flex-direction: column; min-width: 0; font-weight: 500; }
.crumbs { height: 60px; border-bottom: 1px solid #343434; display: grid; grid-template-columns: 45px 69px 40px 37px 114px 40px 29px 26px 889px 109px 45px 1fr; padding: 0 0 1px 39px; align-items: center; flex: none; }
.crumbs svg, .tools svg, .foot svg { fill: none; stroke: #9b9b9b; stroke-width: 1.3; }
.crumbs > .ud { stroke-width: 1.8; }
.pill { width: 57px; height: 27px; margin-top: 2px; border: 1px solid #3e3e3e; border-radius: 14px; display: grid; place-items: center; color: #9b9b9b; font-weight: 400; letter-spacing: 0; }
.crumbs .ud { width: 11px; height: 16px; margin-top: 2px; }
.slash { width: 8px; height: 15px; margin-top: 3px; }
.crumbs .slash { stroke: #474747; }
.crumbs .branch { width: 15px; height: 16px; margin-top: 2px; stroke: #ccc; }
.btn { height: 32px; border: 1px solid #3a3a3a; border-radius: 6px; background: #2c2c2c; display: flex; align-items: center; }
.btn .t { margin-top: -2px; }
.ghost { background: none; border-color: #3e3e3e; justify-content: center; }
.fb { width: 92px; height: 33px; margin-top: 1px; }
.fb .t { margin-top: -1px; }
.hd { margin-top: 2px; }
.tools { height: 51px; background: #222; border-bottom: 1px solid #343434; display: grid; grid-template-columns: 26px 73px 26px 63px 21px 693px 151px 149px 146px 116px; padding: 0 0 0 40px; align-items: center; flex: none; }
.tools > .t { margin-top: -1px; }
.tools > .vr { width: 1px; height: 26px; background: #343434; }
.ins { width: 93px; padding-left: 15px; gap: 11px; background: #39976b; border-color: #3ecf8e; }
.tools .ins svg { stroke: #fff; stroke-width: 2.2; }
.rls { width: 141px; padding-left: 13px; gap: 9px; background: #261600; border-color: #6b4006; color: #f59f0a; }
.tools .rls svg { stroke: #d68b0a; margin-top: 1px; }
.role { width: 139px; padding-left: 13px; gap: 5px; }
.role .mut { letter-spacing: 0; }
.tools .role svg { stroke-width: 2; stroke: #6e6e6e; margin-left: 1px; }
.rt { width: 136px; padding-left: 15px; gap: 11px; }
.api { width: 116px; padding-left: 14px; gap: 10px; }
.tools .rt svg, .tools .api svg { stroke: #777; }

.body { flex: 1; display: flex; justify-content: space-between; min-height: 0; letter-spacing: 0.06px; }
.table { width: 1444px; }
.row { display: grid; grid-template-columns: 81px 150px 313px 312px 313px 150px 125px; height: 43px; border-bottom: 1px solid #343434; }
.row.head { height: 44px; background: #272727; }
.row:nth-child(2), .row:nth-child(4) { height: 44px; }
.row.hov { background: #222; }
.sel { border-right: 1px solid #343434; display: flex; padding: 0 15px 0 10px; justify-content: space-between; align-items: center; }
.cb { width: 20px; height: 20px; margin-top: 1px; border: 1px solid #343434; border-radius: 5px; }
.ex { fill: none; stroke: #ddd; stroke-width: 1.4; margin-top: 1px; }
.c { border-right: 1px solid #343434; padding: 0 10px 1px; display: flex; align-items: center; overflow: hidden; min-width: 0; }
.row:nth-child(3) .c { padding-bottom: 0; }
.c:nth-child(2) { border-right-width: 5px; }
.c b { font-weight: 600; letter-spacing: -0.2px; }
.head .t { margin-top: -2px; }
.gv { letter-spacing: 0.3px; }
.ty { color: #9b9b9b; font-weight: 400; margin-left: 10px; letter-spacing: 0; }
.c svg { fill: none; stroke: #8a8a8a; stroke-width: 1.8; }
.cv { width: 16px; height: 16px; margin-left: auto; margin-right: 8px; }
.c .ki { width: 19px; height: 12px; stroke: #3ecf8e; stroke-width: 1.5; margin-right: 9px; }
.c .li { width: 18px; height: 18px; stroke: #3ecf8e; margin: 2px 9px 0 0; }
.key .cv, .lnk .cv { margin-right: 7px; }
.c.add { justify-content: center; }
.c.add svg { stroke: #aaa; stroke-width: 1.1; margin-top: 4px; }
.nul { color: #7e7e7e; font-weight: 400; }
.nul.up { padding-bottom: 3px; }
.go { margin-left: auto; width: 27px; height: 32px; margin-top: 5px; border: 1px solid #3e3e3e; border-radius: 6px; background: #2c2c2c; display: grid; place-items: center; }
.go svg { stroke: #ddd; stroke-width: 1.9; }
.scroll { width: 21px; background: #424242; display: flex; flex-direction: column; justify-content: space-between; align-items: center; padding: 9px 0 8px; }
.scroll i { border: 5px solid transparent; border-top: 0; border-bottom: 5px solid #8f8f8f; }
.scroll i:last-child { border-bottom: 0; border-top: 5px solid #8f8f8f; }

.foot { height: 45px; border-top: 1px solid #343434; display: grid; grid-template-columns: 55px 48px 70px 37px 55px 96px 827px 27px 74px 190px; padding: 0 0 1px 25px; align-items: center; flex: none; }
.foot .btn { height: 31px; }
.foot .off { width: 45px; border-color: #2e2e2e; }
.foot .off svg { stroke: #666; stroke-width: 1.9; }
.flip { transform: scaleX(-1); }
.big { font-size: 17px; color: #a0a0a0; font-weight: 400; margin-top: 1px; }
.pg { width: 60px; padding-left: 13px; background: #222; }
.foot .rows { width: 87px; height: 33px; margin-top: 1px; }
.foot > .rf { stroke: #777; }
.foot > .tight { letter-spacing: -0.75px; }
.seg { width: 190px; height: 34px; border: 1px solid #343434; border-radius: 7px; display: grid; grid-template-columns: 106px 1fr; padding: 1px; align-items: center; letter-spacing: -0.15px; }
.sg { width: 94px; height: 30px; border: 1px solid #3e3e3e; border-radius: 5px; background: #2c2c2c; display: grid; place-items: center; }
.df { color: #8a8a8a; }

/* desktop taskbar */
.taskbar { height: 60px; flex: none; border-top: 1px solid #55504a; background: linear-gradient(90deg, #35271e 0, #3a2f22 300px, #42382c 700px, #38363a 850px, #373843 900px, #363139 960px, #3b3c43 1020px, #3f4147 1200px, #3a3d45 1450px, #333845 1500px, #292524 1570px, #2e2a26 1800px, #352c28 1920px); display: grid; grid-template-columns: 313px 46px 276px 900px 1fr; align-items: center; color: #fff; }
.weather { position: relative; padding-left: 26px; }
.weather svg { width: 28px; height: 26px; margin-top: 3px; }
.deg { position: absolute; left: 36px; top: -7px; width: 30px; height: 20px; border-radius: 10px; background: #262a2b; text-align: center; font-size: 14px; line-height: 20px; }
.win { width: 29px; height: 29px; }
.find2 { width: 275px; height: 40px; border-radius: 20px; border: 1px solid #71685d; background: #554b40; display: grid; grid-template-columns: 32px 168px 53px; align-items: center; padding-left: 13px; font-size: 17px; letter-spacing: -0.45px; color: #e6e3e0; }
.find2 .i20 { fill: none; stroke: #fff; stroke-width: 2; }
.uni { width: 53px; height: 34px; }
.apps { display: flex; gap: 5px; padding-left: 4px; }
.ap { width: 50px; height: 50px; border-radius: 5px; display: grid; place-items: center; position: relative; }
.ap svg { width: 30px; height: 30px; }
.ap.run::after { content: ""; position: absolute; bottom: 1px; left: 21px; width: 8px; height: 4px; border-radius: 2px; background: #a5a5a8; }
.ap.act { background: #484a4f; border: 1px solid #55565b; }
.ap.act::after { left: 14px; width: 20px; bottom: 0; background: #b5b3b0; }
.ap.act .ph { position: absolute; left: 24px; top: 3px; width: 21px; height: 21px; }
.ver { position: absolute; left: 10px; right: 10px; top: 30px; text-align: center; font-size: 9px; line-height: 10px; letter-spacing: -0.2px; }
.cnt { position: absolute; left: 18px; top: 3px; width: 34px; height: 21px; border-radius: 9px; background: #a39f9a; color: #1c1c1c; font-size: 14.5px; line-height: 20px; text-align: center; letter-spacing: -0.4px; }
.tray { display: grid; grid-template-columns: 43px 50px 31px 28px 27px 105px 34px 1fr; align-items: center; padding-left: 10px; letter-spacing: -0.15px; }
.tl { fill: none; stroke: #fff; stroke-width: 1.9; }
.lang { width: 46px; margin-left: -10px; text-align: center; font-size: 15px; }
.clock { text-align: right; font-size: 15px; width: 92px; justify-self: start; }
.tray .t { line-height: 20px; }
.cop { position: relative; }
.cop svg { width: 30px; height: 28px; }
.pre { position: absolute; left: 7px; top: 19px; width: 23px; height: 10px; background: #ffc400; color: #222; font-size: 8px; line-height: 10px; font-weight: 700; text-align: center; border-radius: 2px; }
```
